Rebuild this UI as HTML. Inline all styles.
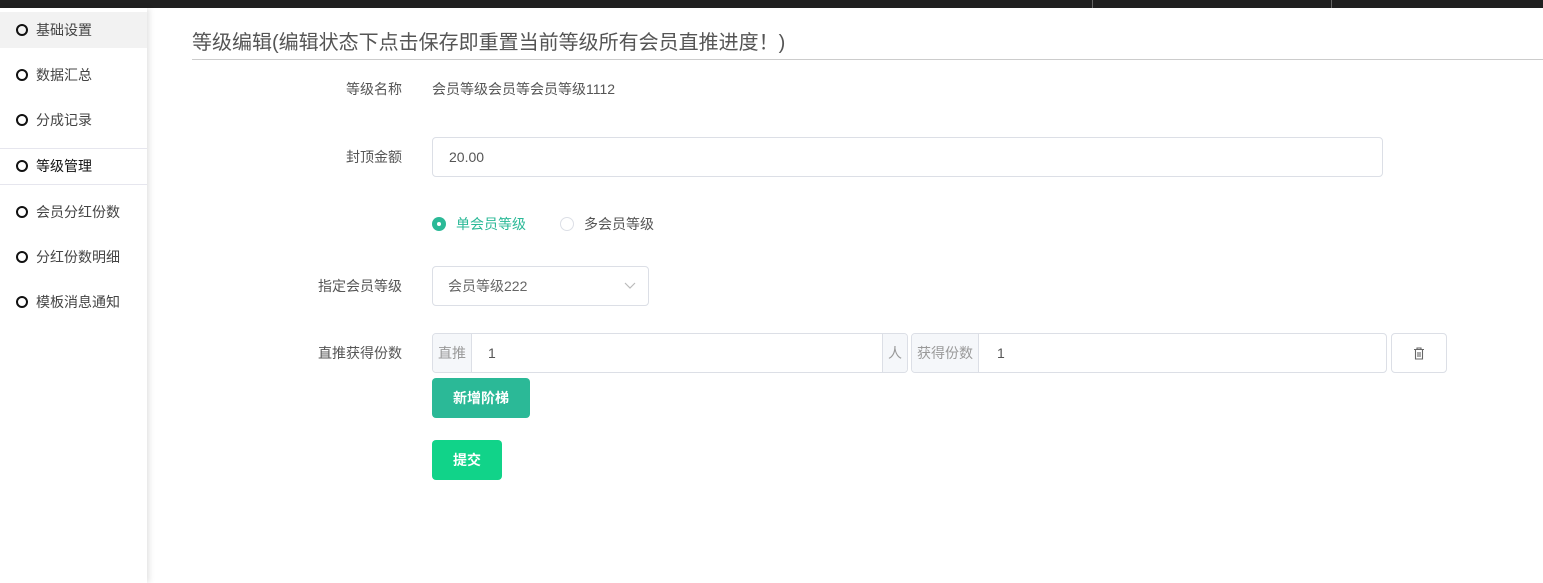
<!DOCTYPE html>
<html><head><meta charset="utf-8"><style>
*{box-sizing:border-box;margin:0;padding:0}
body{width:1543px;height:583px;background:#fff;font-family:"Liberation Sans","Noto Sans CJK SC",sans-serif;position:relative;overflow:hidden;font-size:14px;color:#333}
.top{position:absolute;left:0;top:0;width:1543px;height:8px;background:#202020}
.top i{position:absolute;top:0;width:1px;height:8px;background:#666}
.side{position:absolute;left:0;top:8px;width:147px;height:575px;background:#fff;box-shadow:2px 0 6px rgba(0,0,0,.12)}
.it{position:absolute;left:0;width:147px;height:36px;line-height:36px;padding-left:36px;font-size:14px;color:#444}
.it:before{content:"";position:absolute;left:16px;top:12px;width:12px;height:12px;border:2px solid #111;border-radius:50%;box-sizing:border-box}
.hr{position:absolute;left:0;width:147px;height:1px;background:#e6e6ee}
.title{position:absolute;left:192px;top:26px;font-size:20px;color:#555}
.line{position:absolute;left:192px;top:59px;width:1351px;height:1px;background:#ccc}
.lab{position:absolute;width:210px;left:192px;text-align:right;font-size:14px;line-height:16px;color:#555}
.inp{position:absolute;border:1px solid #dcdfe6;border-radius:4px;background:#fff;font-size:14px;color:#555}
.pre{position:absolute;top:0;height:38px;line-height:38px;background:#f5f7fa;color:#999;text-align:center;font-size:14px}
.btn{position:absolute;color:#fff;font-size:14px;text-align:center;border-radius:4px;font-weight:bold}
</style></head><body>
<div class="top"><i style="left:1092px"></i><i style="left:1331px"></i></div>
<div class="side">
<div class="it" style="top:4px;background:#f2f2f2;height:36px">基础设置</div>
<div class="it" style="top:49px">数据汇总</div>
<div class="it" style="top:94px">分成记录</div>
<div class="hr" style="top:140px"></div>
<div class="it" style="top:140px;color:#111">等级管理</div>
<div class="hr" style="top:176px"></div>
<div class="it" style="top:186px">会员分红份数</div>
<div class="it" style="top:231px">分红份数明细</div>
<div class="it" style="top:276px">模板消息通知</div>
</div>
<div class="title">等级编辑(编辑状态下点击保存即重置当前等级所有会员直推进度！)</div>
<div class="line"></div>
<div class="lab" style="top:81px">等级名称</div>
<div style="position:absolute;left:432px;top:81px;font-size:14px;line-height:16px;color:#555">会员等级会员等会员等级1112</div>
<div class="lab" style="top:149px">封顶金额</div>
<div class="inp" style="left:432px;top:137px;width:951px;height:40px;line-height:38px;padding-left:16px">20.00</div>
<div style="position:absolute;left:432px;top:217px;width:14px;height:14px;border-radius:50%;background:#2bb997"><div style="position:absolute;left:5px;top:5px;width:4px;height:4px;border-radius:50%;background:#fff"></div></div>
<div style="position:absolute;left:456px;top:216px;font-size:14px;line-height:16px;color:#2bb997">单会员等级</div>
<div style="position:absolute;left:560px;top:217px;width:14px;height:14px;border-radius:50%;border:1px solid #dcdfe6"></div>
<div style="position:absolute;left:584px;top:216px;font-size:14px;line-height:16px;color:#555">多会员等级</div>
<div class="lab" style="top:278px">指定会员等级</div>
<div class="inp" style="left:432px;top:266px;width:217px;height:40px;line-height:38px;padding-left:15px;color:#666">会员等级222
<svg style="position:absolute;right:12px;top:15px" width="12" height="8" viewBox="0 0 12 8"><path d="M1 1l5 5 5-5" fill="none" stroke="#bbb" stroke-width="1.2"/></svg></div>
<div class="lab" style="top:345px">直推获得份数</div>
<div class="inp" style="left:432px;top:333px;width:476px;height:40px;overflow:hidden">
<div class="pre" style="left:0;width:39px;border-right:1px solid #dcdfe6">直推</div>
<div style="position:absolute;left:55px;top:0;line-height:38px">1</div>
<div class="pre" style="right:0;width:25px;border-left:1px solid #dcdfe6">人</div></div>
<div class="inp" style="left:911px;top:333px;width:476px;height:40px;overflow:hidden">
<div class="pre" style="left:0;width:67px;border-right:1px solid #dcdfe6">获得份数</div>
<div style="position:absolute;left:85px;top:0;line-height:38px">1</div></div>
<div class="inp" style="left:1391px;top:333px;width:56px;height:40px">
<svg style="position:absolute;left:21px;top:13px" width="12" height="13" viewBox="0 0 12 13"><path d="M1 2.5h10M4 2.5V1h4v1.5M2.5 2.5v9.5h7V2.5M5 5v5M7 5v5" fill="none" stroke="#666" stroke-width="1.1"/></svg></div>
<div class="btn" style="left:432px;top:378px;width:98px;height:40px;line-height:40px;background:#2bb997">新增阶梯</div>
<div class="btn" style="left:432px;top:440px;width:70px;height:40px;line-height:40px;background:#11d389">提交</div>
</body></html>
